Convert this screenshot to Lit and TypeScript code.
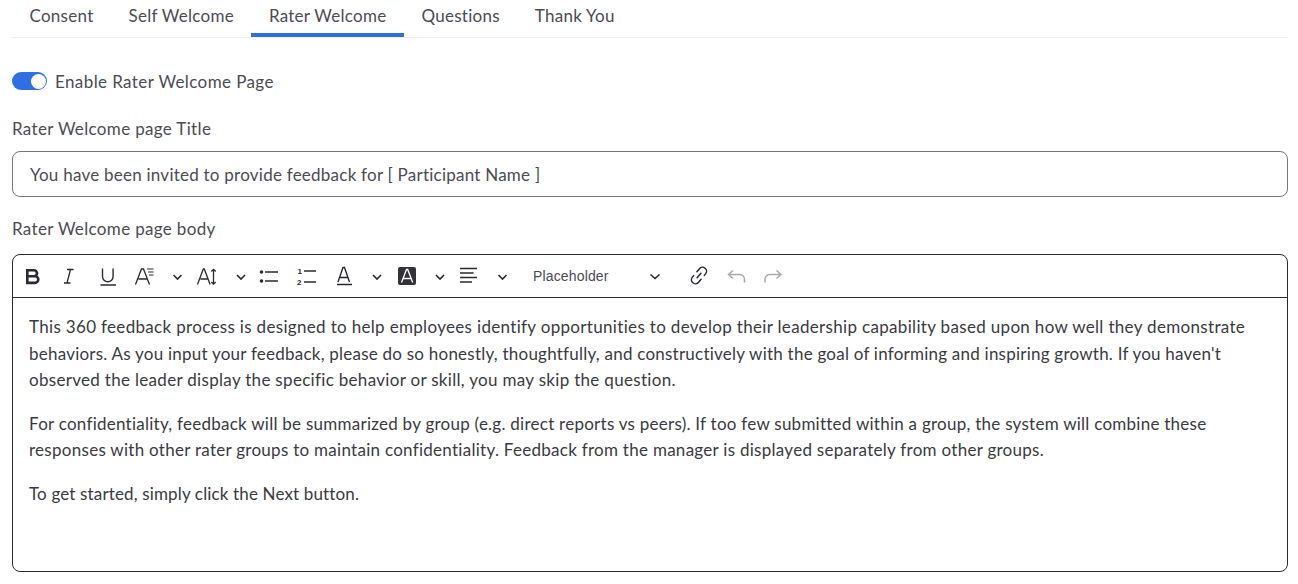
import { LitElement, html, css } from "lit";
import { customElement } from "lit/decorators.js";

const paragraphs: [string, number][][] = [
  [
    ["This 360 feedback process is designed to help employees identify opportunities to develop their leadership capability based upon how well they demonstrate", 0.326],
    ["behaviors. As you input your feedback, please do so honestly, thoughtfully, and constructively with the goal of informing and inspiring growth. If you haven't", 0.23],
    ["observed the leader display the specific behavior or skill, you may skip the question.", 0.31],
  ],
  [
    ["For confidentiality, feedback will be summarized by group (e.g. direct reports vs peers). If too few submitted within a group, the system will combine these", 0.255],
    ["responses with other rater groups to maintain confidentiality. Feedback from the manager is displayed separately from other groups.", 0.277],
  ],
  [["To get started, simply click the Next button.", 0.145]],
];

@customElement("app-root")
export class AppRoot extends LitElement {
  static styles = css`
    :host { display: block; height: 584px; overflow: hidden; background: #fff; font-family: Lato, sans-serif; color: #4c4b55; padding: 0 10px 0 12px; box-sizing: border-box; font-size: 17px; }
    .tabs { display: flex; height: 38px; border-bottom: 1px solid #eeeef0; box-sizing: border-box; letter-spacing: 0.27px; }
    .tab { padding: 0 17.5px; height: 37px; box-sizing: border-box; line-height: 32px; border-bottom: 4px solid transparent; }
    .tab.on { border-bottom-color: #2f6fe4; }
    .toggle-row { display: flex; align-items: center; gap: 8px; margin-top: 33px; height: 20px; letter-spacing: 0.4px; }
    .toggle { width: 35px; height: 18px; border-radius: 9px; background: #2f6fe4; position: relative; }
    .knob { position: absolute; right: 1.5px; top: 1.5px; width: 15px; height: 15px; border-radius: 50%; background: #fff; }
    .label { letter-spacing: 0.34px; line-height: 20px; }
    .l1 { margin-top: 28px; margin-bottom: 12px; }
    .input { height: 46px; border: 1px solid #77767f; border-radius: 8px; box-sizing: border-box; padding: 0 17px; line-height: 45px; letter-spacing: 0.24px; }
    .l2 { margin-top: 22px; }
    .editor { margin-top: 15px; height: 318px; border: 1px solid #2a2a33; border-radius: 8px; box-sizing: border-box; color: #3a3a42; }
    .bar { height: 43px; border-bottom: 1px solid #2a2a33; display: flex; align-items: center; box-sizing: border-box; }
    .ic { display: block; flex: none; }
    .ph { font-family: "Liberation Sans", sans-serif; font-size: 14px; letter-spacing: 0.15px; color: #4c4b55; width: 116px; flex: none; margin-left: 10px; }
    .body { padding: 16.3px 16px; line-height: 26.4px; }
    .line { display: block; white-space: nowrap; }
    p { margin: 0 0 17.4px; }
  `;
  render() {
    const s = "#2a2a33";
    return html`
      <div class="tabs">
        ${["Consent", "Self Welcome", "Rater Welcome", "Questions", "Thank You"].map((t, i) => html`<div class="tab ${i == 2 ? "on" : ""}">${t}</div>`)}
      </div>
      <div class="toggle-row"><div class="toggle"><div class="knob"></div></div><span>Enable Rater Welcome Page</span></div>
      <div class="label l1">Rater Welcome page Title</div>
      <div class="input">You have been invited to provide feedback for [ Participant Name ]</div>
      <div class="label l2">Rater Welcome page body</div>
      <div class="editor">
        <div class="bar">
          <svg class="ic" width="510" height="30" viewBox="13 261 510 30">
            <g fill="none" stroke="${s}" stroke-width="1.5">
              <path d="M27.300 270.300h6.700a3 3 0 0 1 0 6h-6.700zM27.300 276.300h7.700a3.300 3.300 0 0 1 0 6.600h-7.700z" stroke-width="2.600"/>
              <path d="M67 269.500h6.500M64 283h6.500M70.500 269.500l-3.500 13.500" stroke-width="1.300"/>
              <path d="M102.500 268.500v8a5.300 5.300 0 0 0 10.600 0v-8M100.500 285h15.500" stroke-width="1.400"/>
              <path d="M135.500 284.500l6-15.500 2 0 6 15.500M138.500 279h8.500" stroke-width="1.300"/>
              <path d="M147 269h6.500M148 272h5.500M149 275h4.500" stroke-width="1.100"/>
              <path d="M173.500 275l4 4 4-4M237 275l4 4 4-4M373 275l4 4 4-4M436 275l4 4 4-4M498.500 275l4 4 4-4" stroke-width="1.600"/>
              <path d="M197.500 284.500l5.800-15.500 1 0 5.800 15.500M200.500 279h7.500" stroke-width="1.300"/>
              <path d="M213.500 269.500v14.500M211.300 271.500l2.200-2.200 2.200 2.200M211.300 282l2.200 2.200 2.200-2.200" stroke-width="1.300"/>
              <path d="M265 272h13M265 281h13"/>
              <path d="M304 271h12M304 282h12"/>
              <path d="M338 282l5-14.500h1.500l5 14.500M340 277.500h8M337 284.500h15" stroke-width="1.400"/>
              <path d="M460 268.500h17M460 273h13.500M460 277.500h17M460 282h12" stroke-width="1.500"/>
            </g>
            <circle cx="261.500" cy="272" r="1.800" fill="${s}"/><circle cx="261.500" cy="281" r="1.800" fill="${s}"/>
            <rect x="398" y="267" width="18" height="18" rx="2" fill="#333239"/>
            <path d="M401.500 282.500l5-13h1.200l5 13M403.300 278.500h7.500" fill="none" stroke="#fff" stroke-width="1.300"/>
            <text x="297.500" y="274" font-size="8" font-weight="700" font-family="Liberation Sans" fill="${s}">1</text>
            <text x="297" y="285" font-size="8" font-weight="700" font-family="Liberation Sans" fill="${s}">2</text>
          </svg>
          <span class="ph">Placeholder</span>
          <svg class="ic" width="150" height="30" viewBox="649 261 150 30">
            <path d="M650.500 274.500l4.500 4 4.500-4" fill="none" stroke="${s}" stroke-width="1.600"/>
            <g transform="translate(699 275.500) rotate(-50)" fill="none" stroke="${s}" stroke-width="1.500" stroke-linecap="round">
              <path d="M1.500-4H5.500a4 4 0 0 1 0 8H3.500"/>
              <path d="M-1.500 4H-5.500a4 4 0 0 1 0-8H-3.500"/>
              <path d="M-3 0H3"/>
            </g>
            <g fill="none" stroke="#a9a9ae" stroke-width="1.500">
              <path d="M733 270.500l-4.500 4 4.500 4M728.500 274.500h11a5 5 0 0 1 5 4.500v3.500"/>
              <path d="M776.500 270.500l4.500 4-4.500 4M781 274.500h-11a5 5 0 0 0-5 4.500v3.500"/>
            </g>
          </svg>
        </div>
        <div class="body">
          ${paragraphs.map((lines) => html`<p>${lines.map(([t, sp]) => html`<span class="line" style="letter-spacing:${sp}px">${t}</span>`)}</p>`)}
        </div>
      </div>
    `;
  }
}
